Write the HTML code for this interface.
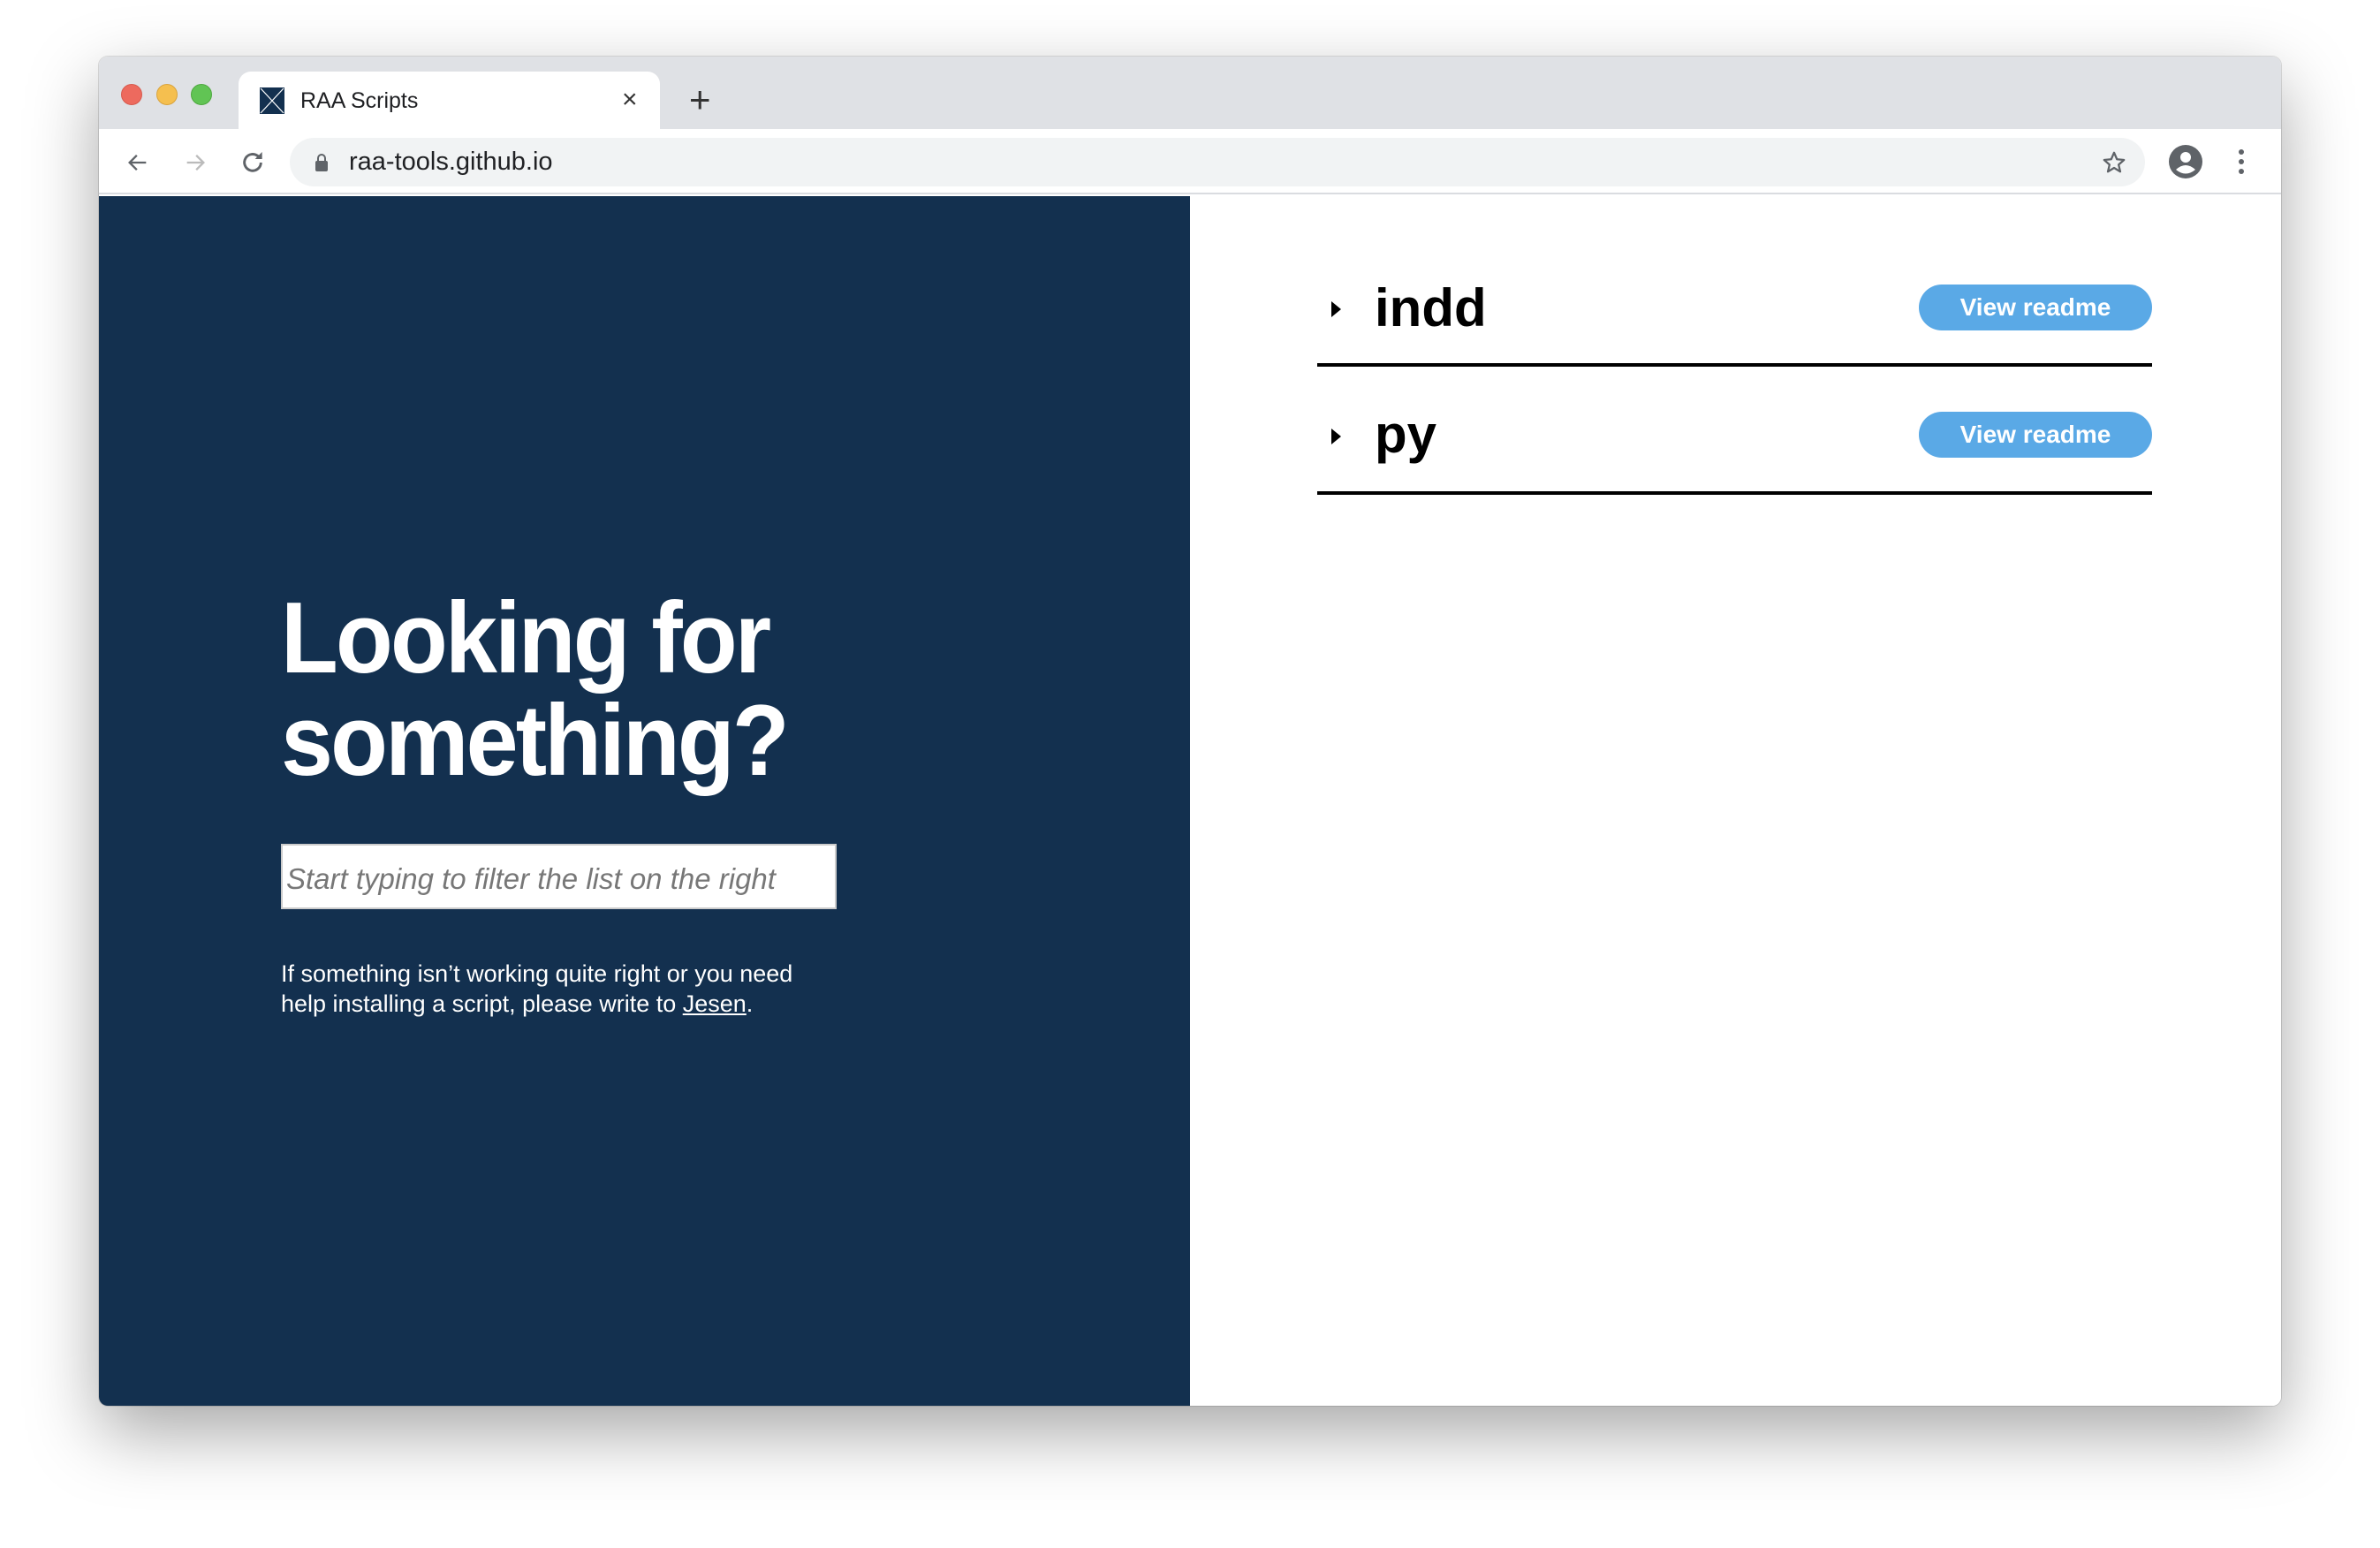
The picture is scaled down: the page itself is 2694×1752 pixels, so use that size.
<!DOCTYPE html>
<html><head><meta charset="utf-8"><style>
*{margin:0;padding:0;box-sizing:border-box}
body{width:2694px;height:1752px;background:#fff;position:relative;overflow:hidden;font-family:"Liberation Sans",sans-serif}
.win{position:absolute;left:112px;top:64px;width:2470px;height:1527px;border-radius:10px;overflow:hidden;box-shadow:0 30px 80px rgba(0,0,0,.35),0 0 0 1px rgba(0,0,0,.12)}
.tabbar{position:absolute;left:0;top:0;width:100%;height:82px;background:#dfe1e5}
.dot{position:absolute;top:31px;width:24px;height:24px;border-radius:50%}
.tab{position:absolute;left:158px;top:17px;width:477px;height:66px;background:#fff;border-radius:14px 14px 0 0}
.toolbar{position:absolute;left:0;top:82px;width:100%;height:74px;background:#fff;border-bottom:2px solid #dadce0}
.addr{position:absolute;left:216px;top:10px;width:2100px;height:55px;background:#f1f3f4;border-radius:28px}
.dark{position:absolute;left:0;top:158px;width:1235px;height:1369px;background:#13304f}
.right{position:absolute;left:1235px;top:158px;right:0;height:1369px;background:#fff}
h1{position:absolute;left:206px;top:601px;color:#fff;font-size:114px;line-height:116px;font-weight:bold;letter-spacing:-3px;transform:scaleX(0.93);transform-origin:left top;white-space:nowrap}
.inp{position:absolute;left:206px;top:891px;width:629px;height:74px;background:#fff;border:2px solid #ccc;font-style:italic;color:#777;font-size:33px;padding:19px 4px}
.p{position:absolute;left:206px;top:1021px;color:#fff;font-size:27px;line-height:34px}
.row{position:absolute;left:1379px;width:945px;border-bottom:4px solid #000}
.tri{position:absolute;left:16px;width:0;height:0;border-left:11px solid #000;border-top:9px solid transparent;border-bottom:9px solid transparent}
.name{position:absolute;left:65px;font-size:60px;font-weight:bold;color:#000}
.btn{position:absolute;right:0;width:264px;height:52px;border-radius:26px;background:#5aa9e6;color:#fff;font-weight:bold;font-size:28px;text-align:center;line-height:52px}
</style></head><body>
<div class="win">
 <div class="tabbar">
  <div class="dot" style="left:25px;background:#ed6a5e;border:1px solid #d65a4e"></div>
  <div class="dot" style="left:65px;background:#f5bf4f;border:1px solid #d9a33c"></div>
  <div class="dot" style="left:104px;background:#61c454;border:1px solid #4ea83f"></div>
  <div class="tab">
   <svg style="position:absolute;left:24px;top:18px" width="28" height="30" viewBox="0 0 28 30"><rect width="28" height="30" fill="#13304f"/><path d="M1 1L27 29M27 1L1 29" stroke="#fff" stroke-width="1.2"/></svg>
   <div style="position:absolute;left:70px;top:19px;font-size:25px;color:#202124">RAA Scripts</div>
   <div style="position:absolute;left:434px;top:15px;font-size:30px;color:#333">×</div>
  </div>
  <div style="position:absolute;left:668px;top:25px;font-size:42px;color:#333;font-weight:300">+</div>
 </div>
 <div class="toolbar">
  <svg style="position:absolute;left:30px;top:24px" width="28" height="28" viewBox="0 0 24 24"><path d="M20 12H5M11 5l-7 7 7 7" fill="none" stroke="#5f6368" stroke-width="2"/></svg>
  <svg style="position:absolute;left:95px;top:24px" width="28" height="28" viewBox="0 0 24 24"><path d="M4 12h15M13 5l7 7-7 7" fill="none" stroke="#bbb" stroke-width="2"/></svg>
  <svg style="position:absolute;left:158px;top:22px" width="32" height="32" viewBox="0 0 24 24"><path d="M19 12a7 7 0 1 1-2-5" fill="none" stroke="#5f6368" stroke-width="2.2"/><path d="M20 3v6h-6z" fill="#5f6368"/></svg>
  <div class="addr">
   <svg style="position:absolute;left:28px;top:17px" width="16" height="21" viewBox="0 0 16 21"><path d="M4 9V6a4 4 0 0 1 8 0v3" fill="none" stroke="#5f6368" stroke-width="2"/><rect x="1" y="9" width="14" height="12" rx="2" fill="#5f6368"/></svg>
   <div style="position:absolute;left:67px;top:11px;font-size:29px;color:#202124">raa-tools.github.io</div>
   <svg style="position:absolute;left:2050px;top:13px" width="30" height="30" viewBox="0 0 24 24"><path d="M12 3l2.6 6 6.4.6-4.9 4.3 1.5 6.3L12 16.8 6.4 20.2l1.5-6.3L3 9.6 9.4 9z" fill="none" stroke="#5f6368" stroke-width="1.8" stroke-linejoin="round"/></svg>
  </div>
  <svg style="position:absolute;left:2343px;top:18px" width="38" height="38" viewBox="0 0 38 38"><circle cx="19" cy="19" r="19" fill="#5f6368"/><circle cx="19" cy="14" r="6" fill="#fff"/><path d="M8 28q11-10 22 0q-11 9-22 0z" fill="#fff"/></svg>
  <svg style="position:absolute;left:2421px;top:22px" width="8" height="30" viewBox="0 0 8 30"><circle cx="4" cy="4" r="3" fill="#5f6368"/><circle cx="4" cy="15" r="3" fill="#5f6368"/><circle cx="4" cy="26" r="3" fill="#5f6368"/></svg>
 </div>
 <div class="dark"></div>
 <div class="right"></div>
 <h1>Looking for<br>something?</h1>
 <div class="inp">Start typing to filter the list on the right</div>
 <div class="p">If something isn’t working quite right or you need<br>help installing a script, please write to <u>Jesen</u>.</div>
 <div class="row" style="top:258px;height:93px">
  <div class="tri" style="top:19px"></div>
  <div class="name" style="top:-8px">indd</div>
  <div class="btn" style="top:0">View readme</div>
 </div>
 <div class="row" style="top:402px;height:94px">
  <div class="tri" style="top:19px"></div>
  <div class="name" style="top:-9px">py</div>
  <div class="btn" style="top:0">View readme</div>
 </div>
</div>
</body></html>
